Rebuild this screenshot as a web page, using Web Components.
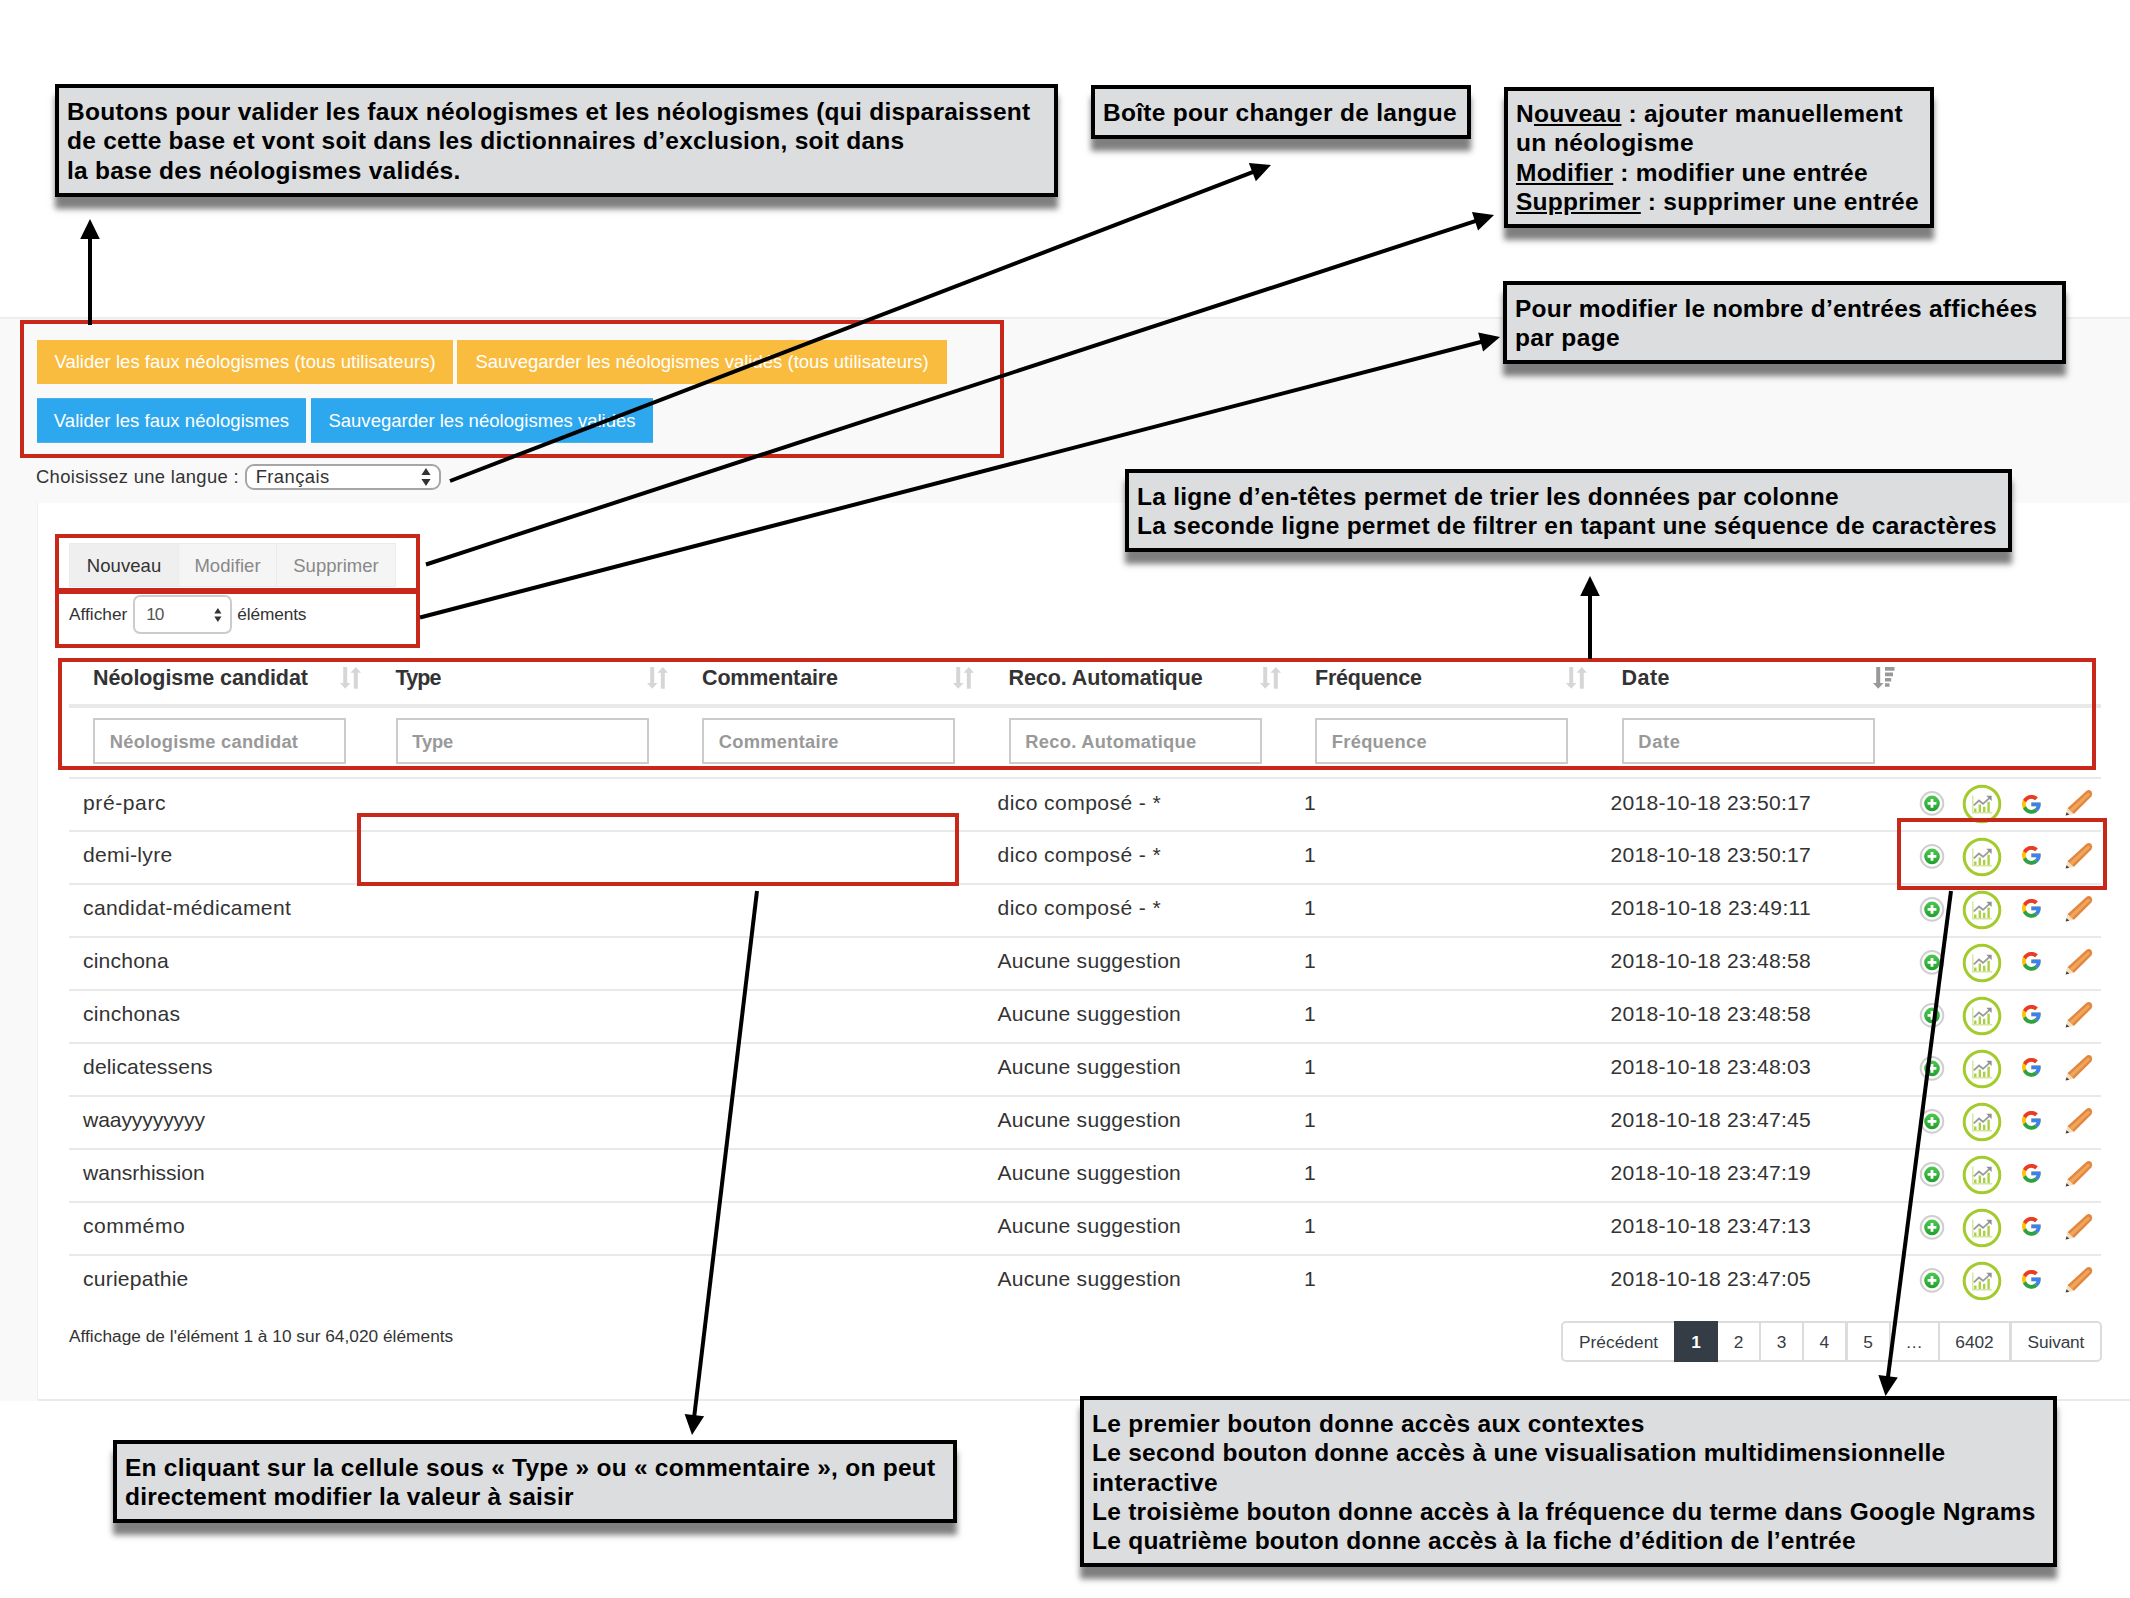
<!DOCTYPE html>
<html lang="fr">
<head>
<meta charset="utf-8">
<title>Néologismes candidats</title>
<style>
html,body{margin:0;padding:0;background:#fff}
body{width:2130px;height:1598px;overflow:hidden;position:relative;font-family:"Liberation Sans",Arial,sans-serif;color:#333}
</style>
</head>
<body>
<neo-page></neo-page>
<annotation-layer>
  <red-frame x="20" y="320" w="984" h="138"></red-frame>
  <red-frame x="55" y="534" w="365" h="58"></red-frame>
  <red-frame x="55" y="590" w="365" h="58"></red-frame>
  <red-frame x="58" y="658" w="2038" h="112"></red-frame>
  <red-frame x="357" y="813" w="602" h="73"></red-frame>
  <red-frame x="1897" y="818" w="210" h="72"></red-frame>
  <arrow-lines></arrow-lines>
  <note-box x="55" y="84" w="1003" h="113">
    <fit-label ink="962">Boutons pour valider les faux néologismes et les néologismes (qui disparaissent</fit-label>
    <fit-label ink="835.5">de cette base et vont soit dans les dictionnaires d’exclusion, soit dans</fit-label>
    <fit-label ink="391.5">la base des néologismes validés.</fit-label>
  </note-box>
  <note-box x="1091" y="85" w="380" h="54">
    <fit-label ink="352">Boîte pour changer de langue</fit-label>
  </note-box>
  <note-box x="1504" y="87" w="430" h="141" style="padding-top:8px">
    <fit-label ink="385.5">N<u>ouveau</u> : ajouter manuellement</fit-label>
    <fit-label ink="176">un néologisme</fit-label>
    <fit-label ink="350"><u>Modifier</u> : modifier une entrée</fit-label>
    <fit-label ink="402"><u>Supprimer</u> : supprimer une entrée</fit-label>
  </note-box>
  <note-box x="1503" y="281" w="563" h="83">
    <fit-label ink="520.5">Pour modifier le nombre d’entrées affichées</fit-label>
    <fit-label ink="103">par page</fit-label>
  </note-box>
  <note-box x="1125" y="469" w="887" h="83">
    <fit-label ink="700">La ligne d’en-têtes permet de trier les données par colonne</fit-label>
    <fit-label ink="858">La seconde ligne permet de filtrer en tapant une séquence de caractères</fit-label>
  </note-box>
  <note-box x="113" y="1440" w="844" h="83">
    <fit-label ink="809">En cliquant sur la cellule sous « Type » ou « commentaire », on peut</fit-label>
    <fit-label ink="448">directement modifier la valeur à saisir</fit-label>
  </note-box>
  <note-box x="1080" y="1396" w="977" h="171">
    <fit-label ink="550.7">Le premier bouton donne accès aux contextes</fit-label>
    <fit-label ink="851.6">Le second bouton donne accès à une visualisation multidimensionnelle</fit-label>
    <fit-label ink="124">interactive</fit-label>
    <fit-label ink="941.7">Le troisième bouton donne accès à la fréquence du terme dans Google Ngrams</fit-label>
    <fit-label ink="762">Le quatrième bouton donne accès à la fiche d’édition de l’entrée</fit-label>
  </note-box>
</annotation-layer>

<script>
const make = (name, html, ready) => customElements.define(name, class extends HTMLElement {
  connectedCallback() {
    if (this.shadowRoot) return;
    this.attachShadow({ mode: 'open' }).innerHTML = typeof html === 'function' ? html(this) : html;
    if (ready) ready(this);
  }
});

const box = el => ['x', 'y', 'w', 'h'].map(k => el.getAttribute(k));

make('annotation-layer', `<style>:host{position:absolute;left:0;top:0;width:2130px;height:1598px;display:block}</style><slot></slot>`);

make('red-frame', el => { const [x, y, w, h] = box(el); return `<style>
:host{position:absolute;box-sizing:border-box;left:${x}px;top:${y}px;width:${w}px;height:${h}px;border:4px solid #c82819}
</style>`; });

make('note-box', el => { const [x, y, w, h] = box(el); return `<style>
:host{position:absolute;box-sizing:border-box;left:${x}px;top:${y}px;width:${w}px;height:${h}px;
border:4px solid #000;background:#dcdddf;color:#000;font-weight:700;font-size:24.5px;line-height:29.33px;
padding:9px 0 0 8px;display:flex;flex-direction:column;align-items:flex-start;box-shadow:0 12px 6px 0 rgba(0,0,0,.5)}
::slotted(*){flex:none}
</style><slot></slot>`; });

make('arrow-lines', () => {
  const arrows = [[90,325,90,219],[450,481,1271,165],[426,564.5,1494,215],[420,617.5,1500,337],[1590,659,1590,576],[757,891,692,1435],[1951,891,1885.5,1396]];
  let g = '';
  for (const [x1, y1, x2, y2] of arrows) {
    const d = Math.hypot(x2 - x1, y2 - y1), ux = (x2 - x1) / d, uy = (y2 - y1) / d;
    const bx = x2 - ux * 20, by = y2 - uy * 20;
    g += `<line x1="${x1}" y1="${y1}" x2="${bx + ux}" y2="${by + uy}"/><path d="M${x2} ${y2}L${bx - uy * 9.8} ${by + ux * 9.8}L${bx + uy * 9.8} ${by - ux * 9.8}Z"/>`;
  }
  return `<style>:host{display:block;position:absolute;inset:0}line{stroke:#000;stroke-width:4}</style><svg width="2130" height="1598">${g}</svg>`;
});

make('action-button', `<style>
:host{display:flex;align-items:center;justify-content:center;box-sizing:border-box;color:#fff;font-size:18.5px;line-height:20px;white-space:nowrap}
:host([kind=warn]){background:#f9bc3f;height:44px}
:host([kind=info]){background:#2da8ee;height:45px;border-top:1px solid #4db2ec;border-bottom:1px solid #4db2ec}
</style><slot></slot>`);

make('drop-select', `<style>
:host{display:flex;align-items:center;justify-content:space-between;box-sizing:border-box;background:#fff}
</style><slot></slot><svg viewBox="0 0 10 18"><path d="M5 0L9.6 7H.4ZM5 18L9.6 11H.4Z" fill="#333"/></svg>`, el => {
  const s = +el.getAttribute('mark') || 18, v = el.shadowRoot.querySelector('svg');
  v.setAttribute('height', s); v.setAttribute('width', s * 10 / 18);
});

make('sort-mark', el => `<style>:host{display:block;width:21px;height:22px}svg{display:block}</style><svg width="22" height="22">${
  el.hasAttribute('desc')
  ? '<path fill="#999" d="M3.2 0h4v16h3.3L5.2 21.7 0 16h3.2ZM12 0h9.5v3.8H12ZM12 5.5h8v3.8h-8ZM12 11h6.2v3.6H12ZM12 16.2h4.5v3.6H12Z"/>'
  : '<path fill="#d6d6d6" d="M3.2 0h4v16h3.3L5.2 21.7 0 16h3.2ZM13.8 21.7h4V5.7H21L15.8 0 10.5 5.7h3.3Z"/>'}</svg>`);

make('row-icons', el => `<style>
:host{display:flex;align-items:flex-start;padding:5px 0 0 14.8px;height:40px}
svg{display:block;flex:none}
.chart{margin-left:16.9px}.g{margin-left:20.3px;margin-top:${el.hasAttribute('first') ? 11 : 9.3}px}.pen{margin-left:24.3px}
</style>
<svg width="26" height="40" viewBox="0 0 26 40"><defs><linearGradient id="a" x2="0" y2="1"><stop offset="0" stop-color="#4cc850"/><stop offset="1" stop-color="#20a02c"/></linearGradient></defs>
<circle cx="13" cy="19.4" r="11.3" fill="#fff" stroke="#cfcfcf" stroke-width="2"/><circle cx="13" cy="19.4" r="7.8" fill="url(#a)"/><path d="M13 15v8.8M8.6 19.4h8.8" stroke="#fff" stroke-width="2.8"/></svg>
<svg class="chart" width="40" height="40" viewBox="0 0 40 40"><circle cx="20" cy="20" r="17.8" fill="#fff" stroke="#a3cb2e" stroke-width="3"/>
<path d="M10.8 11.5v17.3h19.4" fill="none" stroke="#d3e79a" stroke-width="1.4"/>
<path d="M13.3 28v-3.6M17.8 28v-7.4M22.2 28v-5.2M26.6 28v-10.2" stroke="#a9d046" stroke-width="2.4"/>
<path d="M11.8 21.3L17 16.5l4 3.3 6.6-6" fill="none" stroke="#9a9a9f" stroke-width="1.8"/><path d="M24.3 11.8h5.3v5.3Z" fill="#8e8e94"/></svg>
<svg class="g" width="18.7" height="18.7" viewBox="4 4 40 40">
<path fill="#FFC107" d="M43.611 20.083H42V20H24v8h11.303c-1.649 4.657-6.08 8-11.303 8-6.627 0-12-5.373-12-12s5.373-12 12-12c3.059 0 5.842 1.154 7.961 3.039l5.657-5.657C34.046 6.053 29.268 4 24 4 12.955 4 4 12.955 4 24s8.955 20 20 20 20-8.955 20-20c0-1.341-.138-2.65-.389-3.917z"/>
<path fill="#ea3a2d" d="M6.306 14.691l6.571 4.819C14.655 15.108 18.961 12 24 12c3.059 0 5.842 1.154 7.961 3.039l5.657-5.657C34.046 6.053 29.268 4 24 4 16.318 4 9.656 8.337 6.306 14.691z"/>
<path fill="#27a34d" d="M24 44c5.166 0 9.86-1.977 13.409-5.192l-6.19-5.238A11.91 11.91 0 0 1 24 36c-5.202 0-9.619-3.317-11.283-7.946l-6.522 5.025C9.505 39.556 16.227 44 24 44z"/>
<path fill="#3a82f0" d="M43.611 20.083H42V20H24v8h11.303a12.04 12.04 0 0 1-4.087 5.571l6.193 5.238C36.971 39.205 44 34 44 24c0-1.341-.138-2.65-.389-3.917z"/></svg>
<svg class="pen" width="28" height="40" viewBox="0 0 28 40"><path d="M2.4 24.3L21.3 7Q24.2 5 26.5 7.4 28 9.8 26.4 12.5L8.8 29.9Z" fill="#e2873f"/><path d="M4.2 25.9L23.2 8.4 25.2 10.4 7 28.2Z" fill="#f0a55c"/>
<path d="M2.4 24.3L.7 31.3 8.8 29.9Z" fill="#f3dfbf"/><path d="M1.5 28.2L.6 31.5 4.4 30.8Z" fill="#4a4440"/></svg>`);

make('page-nav', `<style>
:host{display:flex;box-sizing:border-box;height:41px;width:541px;border:2px solid #dcdcdc;border-radius:5px;background:#fff;font-size:17.3px;color:#363c44}
span{box-sizing:border-box;display:flex;align-items:center;justify-content:center;border-right:2px solid #dcdcdc;padding-top:1px}
.on{background:#343c46;color:#fff;font-weight:700;border:0;margin:-2px 0}
.wide{border-right-width:3px}.last{border:0}
</style>
<span style="width:111px;border:0"><fit-label ink="78.4">Précédent</fit-label></span><span class="on" style="width:44px">1</span>
<span style="width:43px">2</span><span style="width:43px">3</span><span class="wide" style="width:43.5px">4</span><span style="width:43px">5</span>
<span style="width:49.5px">…</span><span class="wide" style="width:72px"><fit-label ink="37.8">6402</fit-label></span><span class="last" style="width:88px"><fit-label ink="57">Suivant</fit-label></span>`);

const heads = [['Néologisme candidat',213.8,187],['Type',46,40.6],['Commentaire',136,119.5],['Reco. Automatique',194,170.4],['Fréquence',106,93.7],['Date',47,40.5]];
const D = 'dico composé - *', A = 'Aucune suggestion';
const rows = [['pré-parc',81,D,'23:50:17'],['demi-lyre',88.5,D,'23:50:17'],['candidat-médicament',208,D,'23:49:11'],['cinchona',86,A,'23:48:58'],['cinchonas',96.5,A,'23:48:58'],['delicatessens',129,A,'23:48:03'],['waayyyyyyyy',123.5,A,'23:47:45'],['wansrhission',122,A,'23:47:19'],['commémo',101,A,'23:47:13'],['curiepathie',104.6,A,'23:47:05']];

make('neo-table', `<style>
:host{display:block;width:2032px}
.r{display:grid;grid-template-columns:302.5px repeat(5,306.5px) 1fr}
.head{height:53px;border-bottom:4px solid #e9e9e9;font-weight:700;font-size:21.5px}
.head>div{display:flex;align-items:center;justify-content:space-between;box-sizing:border-box;padding:0 10.5px 0 24px}
.head fit-label{padding-top:1px}
.filter{height:69px;font-weight:700;font-size:18.3px;color:#999}
.filter>div{padding:10px 0 0 24.3px}
.in{box-sizing:border-box;width:253px;height:46px;border:2px solid #ccc;display:flex;align-items:center;padding:2px 0 0 14.5px;background:#fff}
.row{box-sizing:border-box;height:53px;border-top:2px solid #e9e9e9;font-size:21.1px;color:#333}
.c{box-sizing:border-box;height:51px;display:flex;align-items:center;padding:0 0 6px 13px}
.c:first-child{padding-left:14px}
.row.first .c{padding-bottom:3px}
</style>
<div class="r head">${heads.map((h, i) => `<div><fit-label ink="${h[1]}">${h[0]}</fit-label><sort-mark ${i == 5 ? 'desc' : ''}></sort-mark></div>`).join('')}</div>
<div class="r filter">${heads.map(h => `<div><div class="in"><fit-label ink="${h[2]}">${h[0]}</fit-label></div></div>`).join('')}</div>
${rows.map((r, i) => `<div class="r row ${i ? '' : 'first'}"><div class="c"><fit-label ink="${r[1]}">${r[0]}</fit-label></div><div></div><div></div>
<div class="c"><fit-label ink="${r[2] === D ? 163 : 182.6}">${r[2]}</fit-label></div><div class="c">1</div><div class="c"><fit-label ink="198.6">2018-10-18 ${r[3]}</fit-label></div>
<row-icons ${i ? '' : 'first'}></row-icons></div>`).join('')}`);

make('neo-page', `<style>
:host{display:flow-root;background:#fff}
.panel{margin-top:317px;border-top:2px solid #eee;background:#f9f9f9;height:1084px;box-sizing:border-box;display:flex;flex-direction:column}
.line{display:flex;padding-left:37px}
.l1{margin-top:21px;gap:4px}.l2{margin-top:14px;gap:5px}
.l3{margin-top:21px;padding-left:36px;align-items:center;font-size:18.4px;height:26px}
.lang{width:196px;height:26px;border:2px solid #a6a6a6;border-radius:9px;padding:0 8px 0 9px;margin-left:6px}
.card{margin:13px 0 0 37px;background:#fff;flex:1;padding:40px 28px 0 31px;border-left:1px solid #eee;border-bottom:2px solid #e9e9e9;border-bottom-left-radius:3px}
.tools{display:flex;height:44px;font-size:18.5px;color:#888}
.tools span{box-sizing:border-box;display:flex;align-items:center;justify-content:center;background:#f5f5f5;border:1px solid #ebebeb;border-left-width:0;padding-top:1px}
.tools .n{background:#efefef;color:#333;border-left-width:1px}
.len{display:flex;align-items:center;font-size:17.3px;margin-top:8px;height:39px}
.len fit-label{margin-bottom:1px}
.num{width:99px;height:39px;border:2px solid #ccc;border-radius:7px;padding:0 8px 0 11px;margin:0 5px 0 6px;color:#555}
neo-table{margin-top:17px}
.foot{display:flex;justify-content:space-between;align-items:flex-start;margin-top:14px;font-size:17.3px;line-height:31px;width:2033px}
</style>
<div class="panel">
<div class="line l1"><action-button kind="warn" style="width:416px"><fit-label ink="381">Valider les faux néologismes (tous utilisateurs)</fit-label></action-button><action-button kind="warn" style="width:490px"><fit-label ink="453">Sauvegarder les néologismes validés (tous utilisateurs)</fit-label></action-button></div>
<div class="line l2"><action-button kind="info" style="width:269px"><fit-label ink="235">Valider les faux néologismes</fit-label></action-button><action-button kind="info" style="width:342px"><fit-label ink="307">Sauvegarder les néologismes validés</fit-label></action-button></div>
<div class="line l3"><fit-label ink="201.5">Choisissez une langue :</fit-label><drop-select class="lang" mark="18"><fit-label ink="72.3">Français</fit-label></drop-select></div>
<div class="card">
<div class="tools"><span class="n" style="width:110px"><fit-label ink="73.2">Nouveau</fit-label></span><span style="width:98px"><fit-label ink="65">Modifier</fit-label></span><span style="width:119px"><fit-label ink="85.3">Supprimer</fit-label></span></div>
<div class="len"><fit-label ink="58.5">Afficher</fit-label><drop-select class="num" mark="14"><fit-label ink="16.5">10</fit-label></drop-select><fit-label ink="69.6">éléments</fit-label></div>
<neo-table></neo-table>
<div class="foot"><fit-label ink="384.6">Affichage de l'élément 1 à 10 sur 64,020 éléments</fit-label><page-nav></page-nav></div>
</div></div>`);

/* A label whose tracking is set so that its ink has the given width.
   Defined last: its font is inherited from the elements above. */
const pen = document.createElement('canvas').getContext('2d');
make('fit-label', `<style>:host{display:inline-block;white-space:pre}</style><slot></slot>`, el => {
  const cs = getComputedStyle(el), t = el.textContent, ink = +el.getAttribute('ink');
  if (!ink || t.length < 2) return;
  pen.font = `${cs.fontWeight} ${cs.fontSize} ${cs.fontFamily}`;
  const m = pen.measureText(t);
  const s = (ink - m.actualBoundingBoxLeft - m.actualBoundingBoxRight) / (t.length - 1);
  el.style.letterSpacing = s.toFixed(3) + 'px';
  el.style.marginRight = (-s).toFixed(3) + 'px';
});
</script>
</body>
</html>
